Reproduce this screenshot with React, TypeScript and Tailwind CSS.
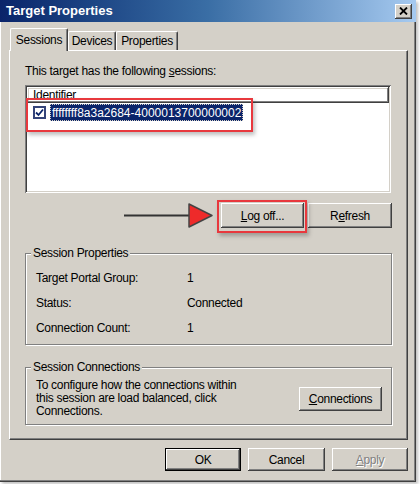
import React from 'react';

// classic 3D bevels
const raised =
  'shadow-[inset_-1px_-1px_0_#404040,inset_1px_1px_0_#ffffff,inset_-2px_-2px_0_#808080,inset_2px_2px_0_#d4d0c8]';
const sunken =
  'shadow-[inset_1px_1px_0_#808080,inset_-1px_-1px_0_#ffffff,inset_2px_2px_0_#404040,inset_-2px_-2px_0_#d4d0c8]';

const Btn: React.FC<{ children: React.ReactNode; className?: string; disabled?: boolean }> = ({
  children,
  className = '',
  disabled,
}) => (
  <div
    className={`flex items-center justify-center bg-[#d4d0c8] ${raised} ${
      disabled ? 'text-[#808080] [text-shadow:1px_1px_0_#ffffff]' : 'text-black'
    } ${className}`}
  >
    {children}
  </div>
);

const Group: React.FC<{ title: string; className?: string; children: React.ReactNode }> = ({
  title,
  className = '',
  children,
}) => (
  <div
    className={`relative border border-[#808080] shadow-[1px_1px_0_#ffffff,inset_1px_1px_0_#ffffff] ${className}`}
  >
    {/* legend sitting over the etched border */}
    <span className="absolute -top-[8px] left-[5px] bg-[#d4d0c8] px-[2px] leading-[14px]">{title}</span>
    {children}
  </div>
);

export default function App() {
  return (
    <div className="w-[420px] h-[484px] bg-white font-['Liberation_Sans',Arial,sans-serif] text-[12px] tracking-[-0.3px] text-black overflow-hidden">
      <div className="relative w-[416px] h-[482px] bg-[#d4d0c8] flex flex-col shadow-[inset_-1px_-1px_0_#404040,inset_-2px_-2px_0_#808080,inset_1px_0_0_#ffffff,2px_2px_3px_rgba(0,0,0,0.25)]">
        {/* title bar */}
        <div className="h-[22px] flex items-center justify-between pl-[6px] pr-[4px] bg-gradient-to-r from-[#0a246a] via-[#3a6ea5] to-[#a6caf0]">
          <span className="text-white font-bold text-[13px] tracking-[0px]">Target Properties</span>
          <div className={`w-[17px] h-[15px] flex items-center justify-center bg-[#d4d0c8] ${raised}`}>
            <svg width="9" height="8" viewBox="0 0 9 8">
              <path d="M1 0.5 L8 7.5 M8 0.5 L1 7.5" stroke="#000" strokeWidth="1.8" />
            </svg>
          </div>
        </div>

        {/* tabs */}
        <div className="flex items-end h-[28px] pl-[10px] pt-[6px]">
          <div className="relative z-10 h-[23px] w-[58px] mb-[-1px] flex items-center justify-center bg-[#d4d0c8] border-t border-l border-white border-r border-r-[#404040] rounded-t-[2px] shadow-[inset_-1px_0_0_#808080]">
            Sessions
          </div>
          <div className="h-[19px] w-[48px] flex items-center justify-center border-t border-l border-white border-r border-r-[#404040] rounded-t-[2px] shadow-[inset_-1px_0_0_#808080]">
            Devices
          </div>
          <div className="h-[19px] w-[62px] flex items-center justify-center border-t border-l border-white border-r border-r-[#404040] rounded-t-[2px] shadow-[inset_-1px_0_0_#808080]">
            Properties
          </div>
        </div>

        {/* tab panel */}
        <div className="mx-[9px] w-[399px] h-[390px] border-t border-l border-white border-r border-r-[#404040] border-b border-b-[#404040] shadow-[inset_-1px_-1px_0_#808080] flex flex-col pl-[15px] pr-[15px]">
          <div className="mt-[13px] leading-[14px]">
            This target has the following <span className="underline">s</span>essions:
          </div>

          {/* session list */}
          <div className={`mt-[7px] w-[366px] h-[108px] bg-white p-[2px] ${sunken}`}>
            <div className={`h-[16px] flex items-center pl-[6px] ${raised}`}>Identifier</div>
            <div className="mt-[1px] flex items-center h-[17px] pl-[6px]">
              <div className="w-[13px] h-[13px] bg-white border-2 border-[#34447a] flex items-center justify-center">
                <svg width="9" height="9" viewBox="0 0 9 9">
                  <path d="M1 4.5 L3.5 7 L8 1.5" stroke="#0a246a" strokeWidth="1.8" fill="none" />
                </svg>
              </div>
              <div className="ml-[4px] h-[17px] px-[2px] flex items-center bg-[#0a246a] text-white tracking-[0px] outline outline-1 outline-dotted outline-[#d4d0c8] -outline-offset-1">
                ffffffff8a3a2684-4000013700000002
              </div>
            </div>
          </div>

          {/* action buttons */}
          <div className="mt-[10px] flex justify-end gap-[4px]">
            <Btn className="w-[83px] h-[25px]">
              <span>
                <span className="underline">L</span>og off...
              </span>
            </Btn>
            <Btn className="w-[84px] h-[25px]">
              <span>
                R<span className="underline">e</span>fresh
              </span>
            </Btn>
          </div>

          <Group title="Session Properties" className="mt-[25px] w-[367px] h-[92px]">
            <div className="pt-[11px] pl-[10px]">
              {[
                ['Target Portal Group:', '1'],
                ['Status:', 'Connected'],
                ['Connection Count:', '1'],
              ].map(([k, v]) => (
                <div key={k} className="h-[25px] flex items-center">
                  <span className="w-[151px]">{k}</span>
                  <span>{v}</span>
                </div>
              ))}
            </div>
          </Group>

          <Group title="Session Connections" className="mt-[22px] w-[367px] h-[58px]">
            <div className="flex justify-between pl-[10px] pr-[9px] pt-[11px]">
              <div className="leading-[13px]">
                To configure how the connections within
                <br />
                this session are load balanced, click
                <br />
                Connections.
              </div>
              <Btn className="w-[83px] h-[24px] mt-[8px]">
                <span>
                  <span className="underline">C</span>onnections
                </span>
              </Btn>
            </div>
          </Group>
        </div>

        {/* dialog buttons */}
        <div className="mt-[8px] flex justify-end gap-[7px] pr-[8px]">
          <div className="w-[76px] h-[23px] border border-black">
            <Btn className="w-full h-full">OK</Btn>
          </div>
          <Btn className="w-[77px] h-[23px]">Cancel</Btn>
          <Btn className="w-[76px] h-[23px]" disabled>
            <span>
              <span className="underline">A</span>pply
            </span>
          </Btn>
        </div>

        {/* annotation overlays */}
        <div className="absolute left-[26px] top-[98px] w-[227px] h-[34px] border-2 border-[#e8383d] shadow-[2px_3px_4px_rgba(0,0,0,0.25)]" />
        <div className="absolute left-[217px] top-[200px] w-[90px] h-[33px] border-2 border-[#e8383d] shadow-[2px_3px_4px_rgba(0,0,0,0.25)]" />
        <svg className="absolute left-[120px] top-[202px]" width="96" height="27" viewBox="0 0 96 27">
          <path d="M4 13.5 H70" stroke="#333" strokeWidth="2" />
          <path d="M69 2 L92 13.5 L69 25 Z" fill="#ee2a2a" stroke="#444" strokeWidth="1.5" strokeLinejoin="round" />
        </svg>
      </div>
    </div>
  );
}
